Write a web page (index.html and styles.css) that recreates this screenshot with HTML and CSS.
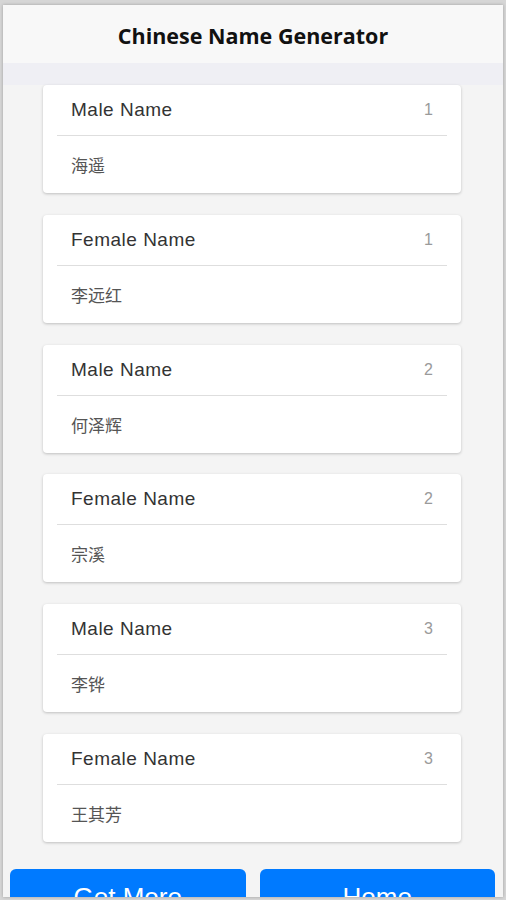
FILE: index.html
```html
<!DOCTYPE html>
<html>
<head>
<meta charset="utf-8">
<link rel="stylesheet" href="styles.css">
</head>
<body>
<div class="screen">
  <div class="header">Chinese Name Generator</div>
  <div class="band"></div>
  <div class="list">
    <div class="card">
      <div class="card-head"><span class="label">Male Name</span><span class="num">1</span></div>
      <div class="card-body">海遥</div>
    </div>
    <div class="card">
      <div class="card-head"><span class="label">Female Name</span><span class="num">1</span></div>
      <div class="card-body">李远红</div>
    </div>
    <div class="card">
      <div class="card-head"><span class="label">Male Name</span><span class="num">2</span></div>
      <div class="card-body">何泽辉</div>
    </div>
    <div class="card">
      <div class="card-head"><span class="label">Female Name</span><span class="num">2</span></div>
      <div class="card-body">宗溪</div>
    </div>
    <div class="card">
      <div class="card-head"><span class="label">Male Name</span><span class="num">3</span></div>
      <div class="card-body">李铧</div>
    </div>
    <div class="card">
      <div class="card-head"><span class="label">Female Name</span><span class="num">3</span></div>
      <div class="card-body">王其芳</div>
    </div>
  </div>
  <div class="actions">
    <button class="btn">Get More</button>
    <button class="btn">Home</button>
  </div>
</div>
</body>
</html>
```
FILE: styles.css
```css
html, body {
  margin: 0;
  padding: 0;
}
body {
  background: #d6d6d6;
  height: 900px;
  overflow: hidden;
  font-family: "Liberation Sans", Arial, "Noto Sans CJK SC", sans-serif;
}
.screen {
  margin: 5px 3px 0 3px;
  height: 892px;
  overflow: hidden;
  background: #f4f4f4;
  box-shadow: 0 0 3px rgba(0,0,0,0.25);
}
.header {
  height: 58px;
  background: #f8f8f8;
  display: flex;
  align-items: center;
  justify-content: center;
  font-family: "Open Sans", "Liberation Sans", sans-serif;
  font-weight: 700;
  font-size: 21.5px;
  color: #111;
  padding-top: 2px;
  box-sizing: border-box;
}
.band {
  height: 22px;
  background: #efeff4;
}
.list {
  display: flex;
  flex-direction: column;
  gap: 21.8px;
  align-items: center;
  padding-right: 2px;
}
.card {
  width: 418px;
  height: 108px;
  background: #fff;
  border-radius: 4px;
  box-shadow: 0 1px 3px rgba(0,0,0,0.22);
  display: flex;
  flex-direction: column;
}
.card-head {
  height: 50px;
  margin: 0 14px;
  border-bottom: 1px solid #dedede;
  display: flex;
  align-items: center;
  justify-content: space-between;
  padding: 0 14px 0 14px;
}
.label {
  font-size: 19px;
  letter-spacing: 0.5px;
  color: #333;
}
.num {
  font-size: 16px;
  color: #9a9a9a;
}
.card-body {
  flex: 1;
  display: flex;
  align-items: center;
  padding-left: 28px;
  font-family: "Noto Sans CJK SC", sans-serif;
  font-size: 17px;
  color: #555;
}
.actions {
  display: flex;
  gap: 14px;
  padding: 27px 8px 0 7px;
}
.btn {
  flex: 1;
  height: 48px;
  border: none;
  border-radius: 6px;
  background: #007aff;
  color: #fff;
  font-family: "Liberation Sans", Arial, sans-serif;
  font-size: 26px;
  padding: 0;
  padding-top: 10px;
}
```
